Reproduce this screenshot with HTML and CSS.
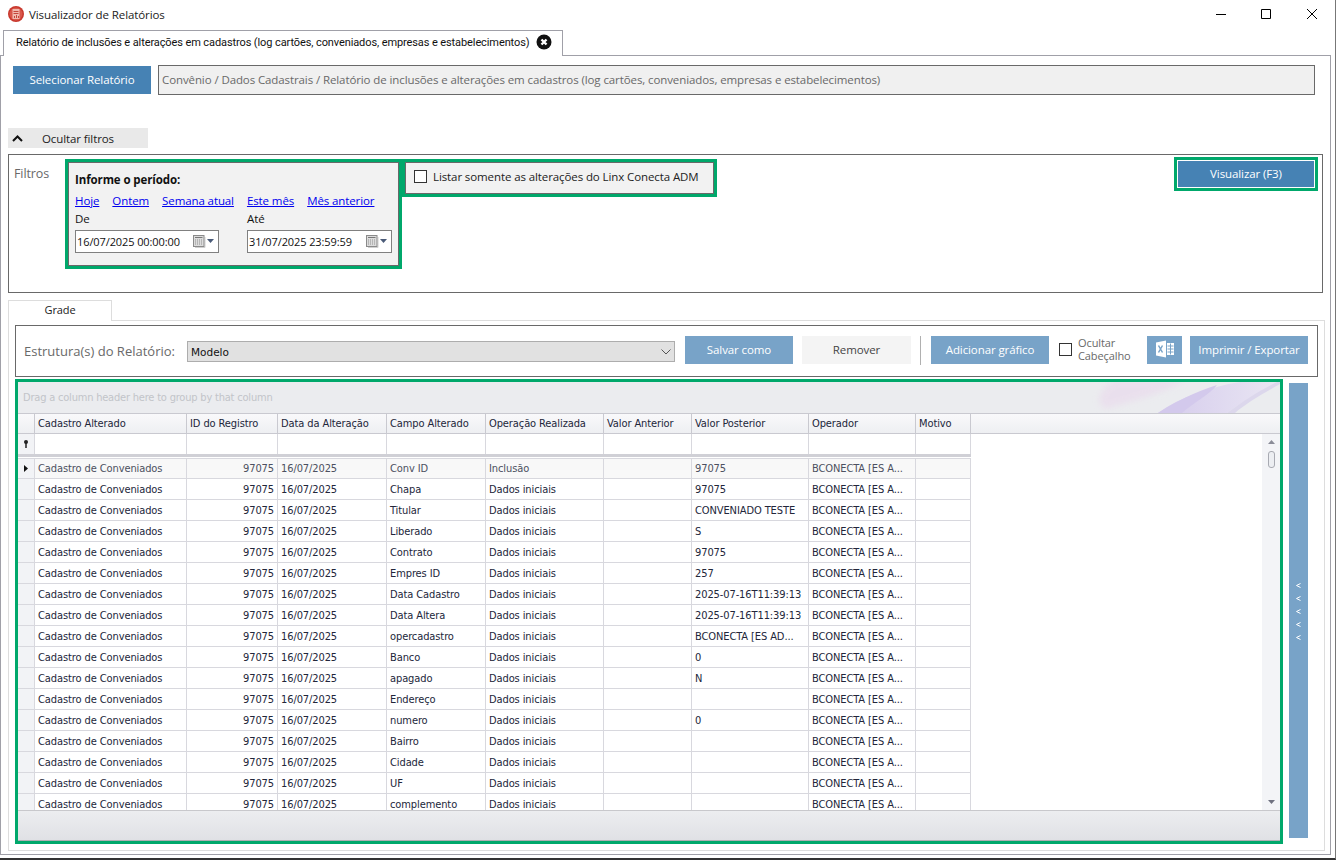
FILE: index.html
```html
<!DOCTYPE html>
<html lang="pt-BR">
<head>
<meta charset="utf-8">
<title>Visualizador de Relatórios</title>
<link rel="stylesheet" href="styles.css">
</head>
<body>
<div class="window">
  <header class="titlebar">
    <svg class="app-icon" width="16" height="16" viewBox="0 0 16 16"><circle cx="8" cy="8" r="8" fill="#c8382d"/><circle cx="8" cy="8" r="6.5" fill="#d9574a"/><path d="M4.500 3h7v10h-7z" fill="#f0b9ae"/><path d="M5.500 5h5v1h-5zM5.500 7h5v1h-5z" fill="#c4463b"/><path d="M6 12v-2h1v2zM8 12V9h1v3zM10 12V10h1v2z" fill="#c4463b"/></svg>
    <span class="title-text">Visualizador de Relatórios</span>
    <div class="win-controls">
      <svg width="10" height="10" viewBox="0 0 10 10"><path d="M0 5.500h10" stroke="#000" fill="none"/></svg>
      <svg width="10" height="10" viewBox="0 0 10 10"><path d="M.5.5h9v9h-9z" stroke="#000" fill="none"/></svg>
      <svg class="win-close" width="10" height="10" viewBox="0 0 10 10"><path d="M0 0l10 10M10 0L0 10" stroke="#000" fill="none"/></svg>
    </div>
  </header>

  <div class="tabstrip">
    <div class="doc-tab">
      <span>Relatório de inclusões e alterações em cadastros (log cartões, conveniados, empresas e estabelecimentos)</span>
      <svg width="16" height="16" viewBox="0 0 16 16"><circle cx="8" cy="8" r="7.500" fill="#111"/><path d="M5.500 5.500l5 5M10.500 5.500l-5 5" stroke="#fff" stroke-width="2.400"/></svg>
    </div>
  </div>

  <main class="panel">
    <div class="report-row">
      <button class="btn btn-strong select-btn">Selecionar Relatório</button>
      <div class="breadcrumb">Convênio / Dados Cadastrais / Relatório de inclusões e alterações em cadastros (log cartões, conveniados, empresas e estabelecimentos)</div>
    </div>

    <div class="toggle">
      <svg width="11" height="7" viewBox="0 0 11 7"><path d="M1 6l4.500-4.500L10 6" stroke="#111" stroke-width="2" fill="none"/></svg>
      <span>Ocultar filtros</span>
    </div>

    <section class="filters">
      <span class="filters-label">Filtros</span>
      <div class="hl period-hl">
        <div class="period">
          <strong class="period-title">Informe o período:</strong>
          <div class="links">
            <a>Hoje</a><a>Ontem</a><a>Semana atual</a><a>Este mês</a><a>Mês anterior</a>
          </div>
          <div class="dates">
            <label class="date-field">De
              <span class="date-input date-from">16/07/2025 00:00:00
                <svg width="21" height="13" viewBox="0 0 21 13"><path d="M12 2v10.500H2" stroke="#d0d0d0" fill="none"/><rect x=".5" y=".5" width="10.500" height="11" fill="#dcdcdc" stroke="#8a8a8a"/><path d="M2 2.500h7.500" stroke="#777"/><path d="M2 5h8M2 7h8M2 9h8" stroke="#8f8f8f" stroke-dasharray="1 1"/><path d="M14 4h7l-3.500 4z" fill="#4a5a78"/></svg>
              </span>
            </label>
            <label class="date-field">Até
              <span class="date-input date-to">31/07/2025 23:59:59
                <svg width="21" height="13" viewBox="0 0 21 13"><path d="M12 2v10.500H2" stroke="#d0d0d0" fill="none"/><rect x=".5" y=".5" width="10.500" height="11" fill="#dcdcdc" stroke="#8a8a8a"/><path d="M2 2.500h7.500" stroke="#777"/><path d="M2 5h8M2 7h8M2 9h8" stroke="#8f8f8f" stroke-dasharray="1 1"/><path d="M14 4h7l-3.500 4z" fill="#4a5a78"/></svg>
              </span>
            </label>
          </div>
        </div>
      </div>
      <div class="hl only-hl">
        <label class="only"><span class="check"></span>Listar somente as alterações do Linx Conecta ADM</label>
      </div>
      <div class="hl view-hl">
        <button class="btn btn-strong view-btn">Visualizar (F3)</button>
      </div>
    </section>

    <div class="grade-tab">Grade</div>
    <section class="grade-page">
      <div class="toolbar">
        <span class="struct-label">Estrutura(s) do Relatório:</span>
        <div class="select"><span>Modelo</span><svg width="10" height="6" viewBox="0 0 10 6"><path d="M.5.5L5 5 9.500.5" stroke="#555" fill="none"/></svg></div>
        <button class="btn btn-soft save">Salvar como</button>
        <button class="btn btn-off remove">Remover</button>
        <i class="divider"></i>
        <button class="btn btn-soft chart">Adicionar gráfico</button>
        <label class="hide-head"><span class="check"></span><span>Ocultar<br>Cabeçalho</span></label>
        <button class="btn btn-soft excel" aria-label="Excel">
          <svg width="18" height="18" viewBox="0 0 18 18"><path d="M0 2.500L10 .5v17L0 15.500z" fill="#fff"/><path d="M11 3h7v12h-7z" fill="#fff"/><path d="M11.500 6h6M11.500 9h6M11.500 12h6M14.500 3.500v11" stroke="#78a3c8"/><path d="M2.500 5.500l4 7M6.500 5.500l-4 7" stroke="#78a3c8" stroke-width="1.500"/></svg>
        </button>
        <button class="btn btn-soft print">Imprimir / Exportar</button>
      </div>

      <div class="grid-row">
        <div class="hl grid-hl">
          <div class="group-panel">
            <span>Drag a column header here to group by that column</span>
            <svg class="swoosh" width="190" height="31" viewBox="0 0 190 31"><defs><filter id="soft" x="-20%" y="-50%" width="140%" height="200%"><feGaussianBlur stdDeviation="3"/></filter><linearGradient id="lav" x1="0" x2="1" y1="0" y2="0"><stop offset="0" stop-color="#d5cbec"/><stop offset="1" stop-color="#e9e6f3"/></linearGradient></defs><path d="M15 27C50 18 80 8 95 -2H25C8 8 5 20 15 27z" fill="#e9d8ec" opacity=".6" filter="url(#soft)"/><path d="M68 31C90 15 120 5 150 0H187C165 12 150 22 137 31z" fill="url(#lav)"/><path d="M68 31C85 20 105 10 127 3C120 12 102 22 92 31z" fill="#d3c9ec"/><path d="M137 31C155 18 170 8 187 0h3v2C172 12 155 22 145 31z" fill="#dcd7ec"/></svg>
          </div>
          <div class="grid-head">
            <table class="tbl">
              <colgroup><col class="c0"><col class="c1"><col class="c2"><col class="c3"><col class="c4"><col class="c5"><col class="c6"><col class="c7"><col class="c8"><col class="c9"></colgroup>
              <tr><th></th><th>Cadastro Alterado</th><th>ID do Registro</th><th>Data da Alteração</th><th>Campo Alterado</th><th>Operação Realizada</th><th>Valor Anterior</th><th>Valor Posterior</th><th>Operador</th><th>Motivo</th></tr>
            </table>
          </div>
          <div class="grid-body">
            <div class="rows">
              <table class="tbl">
                <colgroup><col class="c0"><col class="c1"><col class="c2"><col class="c3"><col class="c4"><col class="c5"><col class="c6"><col class="c7"><col class="c8"><col class="c9"></colgroup>
                <tr class="filter-row"><td class="ind"><svg width="6" height="8" viewBox="0 0 6 8"><circle cx="3" cy="2" r="2" fill="#222"/><path d="M3 3v5" stroke="#222" stroke-width="1.500"/></svg></td><td></td><td></td><td></td><td></td><td></td><td></td><td></td><td></td><td></td></tr>
                <tr class="sep-row"><td colspan="10"></td></tr>
                <tr class="focus"><td class="ind"><svg width="4" height="7" viewBox="0 0 4 7"><path d="M0 0l4 3.500L0 7z" fill="#111"/></svg></td><td>Cadastro de Conveniados</td><td class="num">97075</td><td>16/07/2025</td><td>Conv ID</td><td>Inclusão</td><td></td><td>97075</td><td>BCONECTA [ES A...</td><td></td></tr>
                <tr><td class="ind"></td><td>Cadastro de Conveniados</td><td class="num">97075</td><td>16/07/2025</td><td>Chapa</td><td>Dados iniciais</td><td></td><td>97075</td><td>BCONECTA [ES A...</td><td></td></tr>
                <tr><td class="ind"></td><td>Cadastro de Conveniados</td><td class="num">97075</td><td>16/07/2025</td><td>Titular</td><td>Dados iniciais</td><td></td><td>CONVENIADO TESTE</td><td>BCONECTA [ES A...</td><td></td></tr>
                <tr><td class="ind"></td><td>Cadastro de Conveniados</td><td class="num">97075</td><td>16/07/2025</td><td>Liberado</td><td>Dados iniciais</td><td></td><td>S</td><td>BCONECTA [ES A...</td><td></td></tr>
                <tr><td class="ind"></td><td>Cadastro de Conveniados</td><td class="num">97075</td><td>16/07/2025</td><td>Contrato</td><td>Dados iniciais</td><td></td><td>97075</td><td>BCONECTA [ES A...</td><td></td></tr>
                <tr><td class="ind"></td><td>Cadastro de Conveniados</td><td class="num">97075</td><td>16/07/2025</td><td>Empres ID</td><td>Dados iniciais</td><td></td><td>257</td><td>BCONECTA [ES A...</td><td></td></tr>
                <tr><td class="ind"></td><td>Cadastro de Conveniados</td><td class="num">97075</td><td>16/07/2025</td><td>Data Cadastro</td><td>Dados iniciais</td><td></td><td>2025-07-16T11:39:13</td><td>BCONECTA [ES A...</td><td></td></tr>
                <tr><td class="ind"></td><td>Cadastro de Conveniados</td><td class="num">97075</td><td>16/07/2025</td><td>Data Altera</td><td>Dados iniciais</td><td></td><td>2025-07-16T11:39:13</td><td>BCONECTA [ES A...</td><td></td></tr>
                <tr><td class="ind"></td><td>Cadastro de Conveniados</td><td class="num">97075</td><td>16/07/2025</td><td>opercadastro</td><td>Dados iniciais</td><td></td><td>BCONECTA [ES AD...</td><td>BCONECTA [ES A...</td><td></td></tr>
                <tr><td class="ind"></td><td>Cadastro de Conveniados</td><td class="num">97075</td><td>16/07/2025</td><td>Banco</td><td>Dados iniciais</td><td></td><td>0</td><td>BCONECTA [ES A...</td><td></td></tr>
                <tr><td class="ind"></td><td>Cadastro de Conveniados</td><td class="num">97075</td><td>16/07/2025</td><td>apagado</td><td>Dados iniciais</td><td></td><td>N</td><td>BCONECTA [ES A...</td><td></td></tr>
                <tr><td class="ind"></td><td>Cadastro de Conveniados</td><td class="num">97075</td><td>16/07/2025</td><td>Endereço</td><td>Dados iniciais</td><td></td><td></td><td>BCONECTA [ES A...</td><td></td></tr>
                <tr><td class="ind"></td><td>Cadastro de Conveniados</td><td class="num">97075</td><td>16/07/2025</td><td>numero</td><td>Dados iniciais</td><td></td><td>0</td><td>BCONECTA [ES A...</td><td></td></tr>
                <tr><td class="ind"></td><td>Cadastro de Conveniados</td><td class="num">97075</td><td>16/07/2025</td><td>Bairro</td><td>Dados iniciais</td><td></td><td></td><td>BCONECTA [ES A...</td><td></td></tr>
                <tr><td class="ind"></td><td>Cadastro de Conveniados</td><td class="num">97075</td><td>16/07/2025</td><td>Cidade</td><td>Dados iniciais</td><td></td><td></td><td>BCONECTA [ES A...</td><td></td></tr>
                <tr><td class="ind"></td><td>Cadastro de Conveniados</td><td class="num">97075</td><td>16/07/2025</td><td>UF</td><td>Dados iniciais</td><td></td><td></td><td>BCONECTA [ES A...</td><td></td></tr>
                <tr><td class="ind"></td><td>Cadastro de Conveniados</td><td class="num">97075</td><td>16/07/2025</td><td>complemento</td><td>Dados iniciais</td><td></td><td></td><td>BCONECTA [ES A...</td><td></td></tr>
              </table>
            </div>
            <div class="scrollbar">
              <svg width="7" height="4" viewBox="0 0 7 4"><path d="M3.500 0L7 4H0z" fill="#8a8c98"/></svg>
              <i class="thumb"></i>
              <svg class="down" width="7" height="4" viewBox="0 0 7 4"><path d="M0 0h7L3.500 4z" fill="#6f7180"/></svg>
            </div>
          </div>
          <div class="grid-foot"></div>
        </div>
        <aside class="collapse">
          <svg width="5" height="5" viewBox="0 0 5 5"><path d="M4.500.5L.5 2.500l4 2" stroke="#fff" fill="none"/></svg>
          <svg width="5" height="5" viewBox="0 0 5 5"><path d="M4.500.5L.5 2.500l4 2" stroke="#fff" fill="none"/></svg>
          <svg width="5" height="5" viewBox="0 0 5 5"><path d="M4.500.5L.5 2.500l4 2" stroke="#fff" fill="none"/></svg>
          <svg width="5" height="5" viewBox="0 0 5 5"><path d="M4.500.5L.5 2.500l4 2" stroke="#fff" fill="none"/></svg>
          <svg width="5" height="5" viewBox="0 0 5 5"><path d="M4.500.5L.5 2.500l4 2" stroke="#fff" fill="none"/></svg>
        </aside>
      </div>
    </section>
  </main>
</div>
</body>
</html>
```

FILE: styles.css
```css
* { box-sizing: border-box; }
html, body { margin: 0; height: 100%; }
body { background: #fff; overflow: hidden; font-family: "Open Sans", "Noto Sans", sans-serif; font-size: 11.5px; letter-spacing: -.1px; color: #222; }
.window { width: 1336px; height: 860px; display: flex; flex-direction: column; border-bottom: 2px solid #333; border-right: 1px solid #777; }

.titlebar { height: 30px; flex: none; display: flex; align-items: center; padding: 0 18px 2px 8px; }
.title-text { margin-left: 5px; font-size: 11.5px; color: #222; }
.win-controls { margin-left: auto; display: flex; gap: 35px; }
.win-close { margin-left: 1px; }

.tabstrip { height: 25px; flex: none; padding-left: 3px; display: flex; }
.doc-tab { width: 560px; height: 26px; padding: 0 10px 3px 12px; border: 1px solid #a0a0a8; border-bottom: 0; background: #fff; display: flex; align-items: center; justify-content: space-between; font-family: Roboto, sans-serif; font-size: 11px; letter-spacing: -.1px; color: #111; white-space: nowrap; position: relative; z-index: 1; }

.panel { flex: 1; margin: 0 4px 3px 0; border: 1px solid #a0a0a8; padding: 9px 0 0 7px; display: flex; flex-direction: column; min-height: 0; }

.btn { border: 0; padding: 0 0 2px; font: inherit; letter-spacing: inherit; color: #fff; display: flex; align-items: center; justify-content: center; flex: none; }
.btn-strong { background: #4682b4; }
.btn-soft { background: #78a3c8; height: 28px; }
.btn-off { background: #f4f4f4; color: #444; height: 28px; }

.report-row { display: flex; align-items: center; height: 30px; padding-left: 5px; }
.select-btn { width: 138px; height: 28px; }
.breadcrumb { margin-left: 7px; width: 1157px; height: 30px; border: 1px solid #696969; background: #f0f0f0; color: #696969; padding: 0 0 1px 3px; display: flex; align-items: center; }

.toggle { margin-top: 33px; width: 140px; height: 20px; background: #e9e9e9; display: flex; align-items: center; padding-left: 4px; color: #222; }
.toggle span { margin-left: 19px; }

.filters { margin-top: 6px; width: 1315px; height: 139px; border: 1px solid #696969; display: flex; align-items: flex-start; padding: 4px 5px 0 5px; }
.filters-label { width: 51px; padding-top: 6px; color: #696969; font-size: 12.500px; }
.hl { border: 3px solid #00a86b; flex: none; }
.period-hl { width: 337px; height: 110px; }
.period { height: 100%; border: 1px solid #696969; background: #f2f2f2; padding: 9px 5px 0 6px; color: #111; }
.period-title { display: block; font-size: 11.5px; font-weight: 700; }
.links { display: flex; margin-top: 6px; gap: 13px; }
.links a { color: #0000ee; text-decoration: underline; }
.dates { display: flex; gap: 28px; margin-top: 3px; }
.date-field { display: block; width: 144px; }
.date-input { margin-top: 4px; height: 23px; border: 1px solid #808080; background: #fff; display: flex; align-items: center; justify-content: space-between; padding: 0 4px 0 1px; font-size: 11px; color: #111; }
.date-from { width: 144px; }
.date-to { width: 145px; }

.only-hl { width: 315px; height: 38px; }
.only { height: 100%; border: 1px solid #696969; background: #f2f2f2; display: flex; align-items: center; padding: 0 0 3px 8px; font-size: 11.5px; color: #222; }
.check { width: 13px; height: 13px; border: 1px solid #333; background: #fff; flex: none; margin-right: 6px; }

.view-hl { margin-left: auto; margin-top: -2px; width: 144px; height: 34px; margin-right: -1px; }
.view-btn { width: 100%; height: 100%; border: 1px solid #fff; }

.grade-tab { margin-top: 7px; width: 104px; height: 21px; border: 1px solid #ddd; border-bottom: 0; padding-bottom: 3px; display: flex; align-items: center; justify-content: center; background: #fff; font-size: 11px; color: #222; position: relative; z-index: 1; margin-bottom: -1px; }
.grade-page { flex: 1; width: 1317px; min-height: 0; margin-bottom: 3px; border: 1px solid #ddd; padding: 4px 0 0 6px; }

.toolbar { width: 1303px; height: 52px; border: 1px solid #696969; display: flex; align-items: center; padding: 0 0 2px 8px; }
.struct-label { width: 163px; margin-top: 2px; color: #696969; font-size: 13px; letter-spacing: 0; }
.select { width: 488px; height: 21px; margin-top: 3px; background: #e1e1e1; border: 1px solid #adadad; display: flex; align-items: center; justify-content: space-between; padding: 0 3px 0 3px; font-family: "DejaVu Sans", sans-serif; font-size: 10.500px; letter-spacing: 0; color: #111; }
.save { width: 108px; margin-left: 10px; }
.remove { width: 109px; margin-left: 9px; }
.divider { width: 1px; height: 29px; background: #b0b0b0; margin-left: 9px; }
.chart { width: 118px; margin-left: 10px; }
.hide-head { display: flex; align-items: center; margin-left: 10px; width: 88px; padding-bottom: 2px; color: #696969; line-height: 13px; font-size: 11px; }
.hide-head .check { margin-top: 1px; }
.excel { width: 35px; }
.print { width: 118px; margin-left: 8px; }

.grid-row { display: flex; align-items: flex-start; margin-top: 2px; }
.grid-hl { width: 1268px; height: 465px; display: flex; flex-direction: column; }
.group-panel { height: 31px; flex: none; background: #ebecef; color: #c2c4c9; font-family: "DejaVu Sans Condensed", "DejaVu Sans", sans-serif; font-size: 11px; letter-spacing: -.2px; padding-left: 5px; display: flex; align-items: center; justify-content: space-between; overflow: hidden; }
.swoosh { flex: none; }
.grid-head { height: 21px; flex: none; background: linear-gradient(#f9f9fb, #eeeff2); border-top: 1px solid #c9c9d0; border-bottom: 1px solid #c9c9d0; }
.tbl { border-collapse: separate; border-spacing: 0; table-layout: fixed; width: 953px; font-family: "DejaVu Sans Condensed", "DejaVu Sans", sans-serif; font-size: 11px; letter-spacing: -.1px; color: #22263a; }
.c0 { width: 17px; } .c1 { width: 152px; } .c2 { width: 91px; } .c3 { width: 109px; } .c4 { width: 99px; } .c5 { width: 118px; } .c6 { width: 88px; } .c7 { width: 117px; } .c8 { width: 107px; } .c9 { width: 55px; }
.tbl th { height: 19px; padding: 0 3px; font-weight: 400; text-align: left; border-right: 1px solid #c9c9d0; overflow: hidden; white-space: nowrap; }
.tbl td { height: 21px; padding: 0 3px; border-right: 1px solid #d8d8de; border-bottom: 1px solid #d8d8de; white-space: nowrap; overflow: hidden; }
.tbl td.num { text-align: right; }
.tbl td.ind { background: #f2f3f6; padding: 0; text-align: center; }
.tbl .filter-row td { height: 20px; border-bottom: 0; }
.tbl .sep-row td { height: 4px; padding: 0; border-right: 0; border-top: 3px solid #d0d0d6; border-bottom: 0; background: #fff; font-size: 0; line-height: 0; }
.focus td { background: #f8f8f8; color: #4c5060; border-top: 1px solid #d8d8de; }
.grid-body { flex: 1; min-height: 0; display: flex; justify-content: space-between; background: #fff; overflow: hidden; }
.rows { min-width: 0; overflow: hidden; }
.scrollbar { width: 18px; background: #f3f4f7; display: flex; flex-direction: column; align-items: center; padding: 6px 0 6px; }
.thumb { width: 7px; height: 17px; margin-top: 7px; border: 1px solid #a8aab2; border-radius: 3px; background: #eceef2; }
.down { margin-top: auto; }
.grid-foot { height: 31px; flex: none; background: linear-gradient(#ecedf0, #e0e1e5); border-top: 1px solid #c8c8cc; border-bottom: 1px solid #b0b0b4; }

.collapse { width: 19px; height: 455px; margin: 4px 0 0 6px; background: #78a3c8; display: flex; flex-direction: column; align-items: center; gap: 8px; padding-top: 200px; }
```
